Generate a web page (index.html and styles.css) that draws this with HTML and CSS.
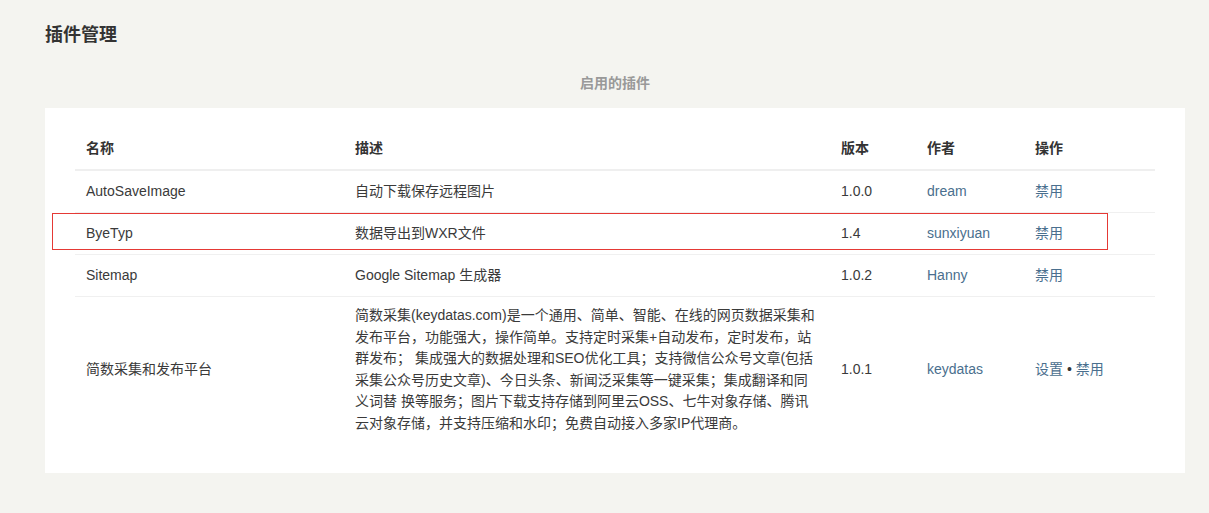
FILE: index.html
```html
<!DOCTYPE html>
<html lang="zh-CN">
<head>
<meta charset="utf-8">
<title>插件管理</title>
<link rel="stylesheet" href="styles.css">
</head>
<body>
<div class="page">
  <h1 class="title">插件管理</h1>
  <div class="subtitle">启用的插件</div>
  <div class="card">
    <table class="plugins">
      <colgroup>
        <col class="c-name"><col class="c-desc"><col class="c-ver"><col class="c-author"><col class="c-op">
      </colgroup>
      <thead>
        <tr class="head">
          <th>名称</th><th>描述</th><th>版本</th><th>作者</th><th>操作</th>
        </tr>
      </thead>
      <tbody>
        <tr>
          <td>AutoSaveImage</td>
          <td>自动下载保存远程图片</td>
          <td>1.0.0</td>
          <td><a class="link">dream</a></td>
          <td><a class="link">禁用</a></td>
        </tr>
        <tr>
          <td>ByeTyp</td>
          <td>数据导出到WXR文件</td>
          <td>1.4</td>
          <td><a class="link">sunxiyuan</a></td>
          <td><a class="link">禁用</a></td>
        </tr>
        <tr>
          <td>Sitemap</td>
          <td>Google Sitemap 生成器</td>
          <td>1.0.2</td>
          <td><a class="link">Hanny</a></td>
          <td><a class="link">禁用</a></td>
        </tr>
        <tr class="last">
          <td>简数采集和发布平台</td>
          <td>简数采集(keydatas.com)是一个通用、简单、智能、在线的网页数据采集和发布平台，功能强大，操作简单。支持定时采集+自动发布，定时发布，站群发布； 集成强大的数据处理和SEO优化工具；支持微信公众号文章(包括采集公众号历史文章)、今日头条、新闻泛采集等一键采集；集成翻译和同义词替 换等服务；图片下载支持存储到阿里云OSS、七牛对象存储、腾讯云对象存储，并支持压缩和水印；免费自动接入多家IP代理商。</td>
          <td>1.0.1</td>
          <td><a class="link">keydatas</a></td>
          <td><a class="link">设置</a> <span class="dot">•</span> <a class="link">禁用</a></td>
        </tr>
      </tbody>
    </table>
    <div class="highlight"></div>
  </div>
</div>
</body>
</html>
```

FILE: styles.css
```css
html, body {
  margin: 0;
  padding: 0;
  background: #f4f4f0;
}
body {
  font-family: "Liberation Sans", Arial, "Noto Sans CJK SC", sans-serif;
  font-size: 14px;
  color: #333;
}
.page {
  padding: 20px 24px 0 45px;
}
.title {
  margin: 0;
  font-size: 18px;
  line-height: 30px;
  font-weight: bold;
  color: #333;
}
.subtitle {
  margin-top: 23px;
  text-align: center;
  font-size: 14px;
  line-height: 20px;
  font-weight: bold;
  color: #999;
}
.card {
  position: relative;
  margin-top: 15px;
  background: #fff;
  padding: 20px 30px 30px 30px;
}
.plugins {
  width: 100%;
  table-layout: fixed;
  border-collapse: separate;
  border-spacing: 0;
}
.c-name { width: 269px; }
.c-desc { width: 486px; }
.c-ver { width: 86px; }
.c-author { width: 108px; }
.c-op { width: 131px; }
.plugins th,
.plugins td {
  text-align: left;
  vertical-align: middle;
  padding: 8px 11px;
  line-height: 21.6px;
}
.plugins th {
  font-weight: bold;
  color: #333;
  border-bottom: 2px solid #efefef;
}
.plugins tr.head { height: 43px; }
.plugins tbody tr { height: 42px; }
.plugins td {
  color: #3a3a3a;
  border-bottom: 1px solid #f0f0f0;
}
.plugins tr.last td {
  border-bottom: none;
}
.link {
  color: #4a6f8e;
  text-decoration: none;
}
.dot {
  color: #333;
}
.highlight {
  position: absolute;
  left: 7px;
  top: 105px;
  width: 1054px;
  height: 35px;
  border: 1px solid #e53935;
  pointer-events: none;
}
```
